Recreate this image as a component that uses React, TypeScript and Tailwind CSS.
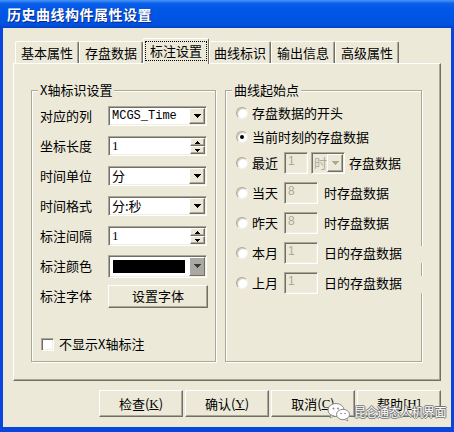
const sunken =
  "border border-t-[#aca899] border-l-[#aca899] border-r-white border-b-white shadow-[inset_1px_1px_0_#716f64,inset_-1px_-1px_0_#f1efe2]";
const raised =
  "border border-t-white border-l-white border-r-[#716f64] border-b-[#716f64] shadow-[inset_-1px_-1px_0_#aca899]";

const Arrow = ({ color = "#000" }: { color?: string }) => (
  <svg width="7" height="4" viewBox="0 0 7 4">
    <path d="M0 0h7v1H0zM1 1h5v1H1zM2 2h3v1H2zM3 3h1v1H3z" fill={color} />
  </svg>
);

const DropBtn = ({ disabled, gray }: { disabled?: boolean; gray?: boolean }) => (
  <div
    className={`w-[16px] shrink-0 flex items-center justify-center ${raised} ${gray ? "bg-[#a9a8a2]" : "bg-[#ece9d8]"}`}
  >
    <Arrow color={disabled ? "#aca899" : gray ? "#3a3a3a" : "#000"} />
  </div>
);

const Select = ({ value, mono }: { value: string; mono?: boolean }) => (
  <div className={`w-[99px] h-[20px] bg-white flex p-[1px] ${sunken}`}>
    <div
      className={`flex-1 flex items-center pl-[2px] ${mono ? "font-['Liberation_Mono',monospace] text-[12px]" : ""}`}
    >
      {value}
    </div>
    <DropBtn />
  </div>
);

const Spin = ({ value }: { value: string }) => (
  <div className={`w-[99px] h-[20px] bg-white flex p-[1px] ${sunken}`}>
    <div className="flex-1 flex items-center pl-[2px] font-['Liberation_Serif',serif] text-[13px]">{value}</div>
    <div className="w-[15px] flex flex-col">
      <div className={`flex-1 flex items-center justify-center bg-[#ece9d8] ${raised}`}>
        <svg width="5" height="3" viewBox="0 0 5 3">
          <path d="M2 0h1v1H2zM1 1h3v1H1zM0 2h5v1H0z" fill="#000" />
        </svg>
      </div>
      <div className={`flex-1 flex items-center justify-center bg-[#ece9d8] ${raised}`}>
        <svg width="5" height="3" viewBox="0 0 5 3">
          <path d="M0 0h5v1H0zM1 1h3v1H1zM2 2h1v1H2z" fill="#000" />
        </svg>
      </div>
    </div>
  </div>
);

const DisabledBox = ({ value, w = "w-[34px]" }: { value: string; w?: string }) => (
  <div
    className={`${w} h-[22px] bg-[#ece9d8] pl-[3px] pt-[1px] text-[#aca899] font-['Liberation_Sans',sans-serif] text-[12px] leading-[14px] ${sunken}`}
  >
    {value}
  </div>
);

const Radio = ({ checked }: { checked?: boolean }) => (
  <div className="w-[12px] h-[12px] shrink-0 rounded-full bg-white border border-[#aca899] border-b-[#f4f3ee] border-r-[#f4f3ee] shadow-[inset_1px_1px_1px_#c9c6b8] flex items-center justify-center">
    {checked && <div className="w-[4px] h-[4px] rounded-full bg-black" />}
  </div>
);

const Tab = ({ label, w, active }: { label: string; w: string; active?: boolean }) =>
  active ? (
    <div
      className={`${w} h-[26px] -mb-[1px] relative z-10 bg-[#ece9d8] border-t border-l border-white border-r border-r-[#716f64] rounded-t-[2px] flex px-[1px] pt-[2px] pb-[3px]`}
    >
      <div className="flex-1 border border-dotted border-black flex items-center justify-center pb-[1px]">
        {label}
      </div>
    </div>
  ) : (
    <div
      className={`${w} h-[22px] border-t border-l border-white border-r border-r-[#716f64] shadow-[inset_-1px_0_0_#aca899] rounded-t-[2px] flex items-center justify-center`}
    >
      {label}
    </div>
  );

const leftRows = [
  { label: "对应的列", ctrl: <Select value="MCGS_Time" mono /> },
  { label: "坐标长度", ctrl: <Spin value="1" /> },
  { label: "时间单位", ctrl: <Select value="分" /> },
  { label: "时间格式", ctrl: <Select value="分:秒" /> },
  { label: "标注间隔", ctrl: <Spin value="1" /> },
  {
    label: "标注颜色",
    ctrl: (
      <div className={`w-[99px] h-[23px] bg-white flex p-[1px] ${sunken}`}>
        <div className="flex-1 flex p-[3px] pr-[4px]">
          <div className="flex-1 bg-black" />
        </div>
        <DropBtn gray />
      </div>
    ),
  },
  {
    label: "标注字体",
    ctrl: (
      <div className={`w-[100px] h-[23px] bg-[#ece9d8] flex items-center justify-center ${raised}`}>设置字体</div>
    ),
  },
];

const ranges = [
  { label: "当天", val: "8", tail: "时存盘数据" },
  { label: "昨天", val: "8", tail: "时存盘数据" },
  { label: "本月", val: "1", tail: "日的存盘数据" },
  { label: "上月", val: "1", tail: "日的存盘数据" },
];

const buttons = [
  { text: "检查(", key: "K", end: ")" },
  { text: "确认(", key: "Y", end: ")" },
  { text: "取消(", key: "C", end: ")" },
  { text: "帮助[", key: "H", end: "]" },
];

export default function App() {
  return (
    <div className="w-[454px] h-[432px] relative overflow-hidden flex flex-col bg-[#0a46dd] font-['Noto_Sans_CJK_SC',sans-serif] text-[13px] leading-[16px] text-black">
      <div className="h-[28px] shrink-0 flex items-center pl-[7px] bg-[linear-gradient(180deg,#4a97f8_0%,#0b60ea_12%,#0056e6_35%,#0054e3_75%,#004fd8_92%,#0040c4_100%)]">
        <span className="text-white font-bold text-[14px] [text-shadow:1px_1px_0_#0b2a8a] tracking-[0.5px]">
          历史曲线构件属性设置
        </span>
      </div>

      <div className="flex-1 mx-[3px] mb-[5px] bg-[#ece9d8] flex flex-col px-[10px] pt-[10px]">
        <div className="h-[25px] flex items-end pl-[2px]">
          <Tab label="基本属性" w="w-[64px]" />
          <Tab label="存盘数据" w="w-[64px]" />
          <Tab label="标注设置" w="w-[66px]" active />
          <Tab label="曲线标识" w="w-[62px]" />
          <Tab label="输出信息" w="w-[64px]" />
          <Tab label="高级属性" w="w-[64px]" />
        </div>

        <div className="h-[318px] border border-t-white border-l-white border-r-[#716f64] border-b-[#716f64] shadow-[inset_-1px_-1px_0_#aca899] flex gap-[9px] pl-[17px] pt-[26px]">
          {/* X axis group */}
          <div className="w-[185px] h-[272px] relative border border-[#aca899] shadow-[inset_1px_1px_0_#fff,1px_1px_0_#fff] pt-[10px] pl-[8px]">
            <span className="absolute -top-[9px] left-[6px] px-[2px] bg-[#ece9d8]">X轴标识设置</span>
            {leftRows.map((r) => (
              <div key={r.label} className="h-[30px] flex items-center">
                <div className="w-[68px]">{r.label}</div>
                {r.ctrl}
              </div>
            ))}
            <div className="mt-[25px] ml-[1px] flex items-center gap-[5px]">
              <div className={`w-[13px] h-[13px] bg-white ${sunken}`} />
              <span>不显示X轴标注</span>
            </div>
          </div>

          {/* start point group */}
          <div className="w-[197px] h-[272px] relative border border-[#aca899] shadow-[inset_1px_1px_0_#fff,1px_1px_0_#fff] pt-[10px] pl-[10px]">
            <span className="absolute -top-[9px] left-[6px] px-[2px] bg-[#ece9d8]">曲线起始点</span>
            <div className="h-[24px] flex items-center gap-[4px]">
              <Radio />
              <span>存盘数据的开头</span>
            </div>
            <div className="h-[24px] flex items-center gap-[4px]">
              <Radio checked />
              <span>当前时刻的存盘数据</span>
            </div>
            <div className="h-[22px] mt-[3px] flex items-center">
              <Radio />
              <span className="w-[36px] pl-[4px]">最近</span>
              <DisabledBox value="1" w="w-[24px]" />
              <div className={`ml-[3px] w-[34px] h-[22px] flex p-[1px] bg-[#ece9d8] ${sunken}`}>
                <div className="flex-1 flex items-center pl-[1px] text-[#aca899]">时</div>
                <DropBtn disabled />
              </div>
              <span className="ml-[4px]">存盘数据</span>
            </div>
            <div className="flex flex-col gap-[8px] mt-[8px]">
              {ranges.map((r) => (
                <div key={r.label} className="h-[22px] flex items-center">
                  <Radio />
                  <span className="w-[36px] pl-[4px]">{r.label}</span>
                  <DisabledBox value={r.val} />
                  <span className="ml-[6px]">{r.tail}</span>
                </div>
              ))}
            </div>
            <span className="absolute -right-[2px] top-[155px] h-[17px] w-[3px] bg-[#ece9d8]" />
            <span className="absolute -right-[2px] top-[185px] h-[17px] w-[3px] bg-[#ece9d8]" />
          </div>
        </div>

        <div className="mt-[9px] flex justify-end gap-[2px]">
          {buttons.map((b) => (
            <div
              key={b.key}
              className={`w-[84px] h-[27px] bg-[#ece9d8] flex items-center justify-center ${raised}`}
            >
              {b.text}
              <span className="underline font-['Liberation_Serif',serif]">{b.key}</span>
              {b.end}
            </div>
          ))}
        </div>
      </div>

      {/* watermark */}
      <div className="absolute left-[327px] top-[402px] flex items-center gap-[3px] pointer-events-none">
        <svg width="24" height="20" viewBox="0 0 24 20">
          <ellipse cx="9" cy="8" rx="8" ry="6.5" fill="#fff" stroke="#8a8a8a" strokeWidth="1" />
          <path d="M4 13l-1 3 4-2z" fill="#fff" stroke="#8a8a8a" strokeWidth="0.8" />
          <ellipse cx="16" cy="12.5" rx="6.5" ry="5.2" fill="#fff" stroke="#8a8a8a" strokeWidth="1" />
          <path d="M20 16.5l1 2.5-3.5-1.5z" fill="#fff" stroke="#8a8a8a" strokeWidth="0.8" />
          <circle cx="6.5" cy="6.5" r="1" fill="#8a8a8a" />
          <circle cx="11" cy="6.5" r="1" fill="#8a8a8a" />
          <circle cx="14" cy="11.5" r="0.8" fill="#8a8a8a" />
          <circle cx="18" cy="11.5" r="0.8" fill="#8a8a8a" />
        </svg>
        <span className="text-white text-[12px] leading-[14px] tracking-[-0.5px] [text-shadow:1px_0_0_#777,-1px_0_0_#777,0_1px_0_#777,0_-1px_0_#777]">
          昆仑通态人机界面
        </span>
      </div>
    </div>
  );
}
